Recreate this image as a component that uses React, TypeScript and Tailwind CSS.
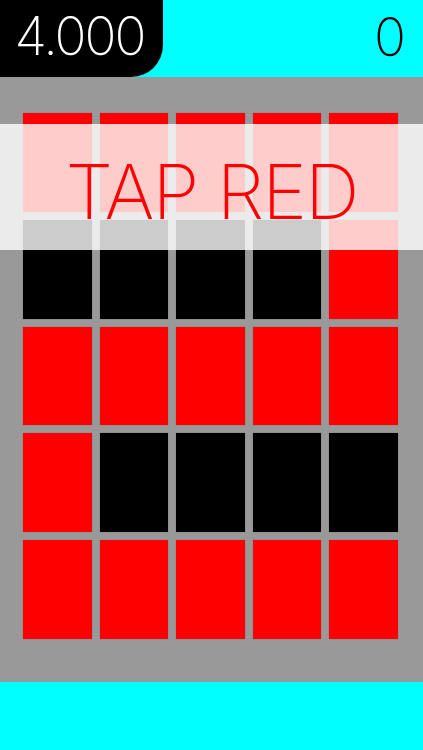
const GRID: ("r" | "b")[][] = [
  ["r", "r", "r", "r", "r"],
  ["b", "b", "b", "b", "r"],
  ["r", "r", "r", "r", "r"],
  ["r", "b", "b", "b", "b"],
  ["r", "r", "r", "r", "r"],
];

const FONT = { fontFamily: "Inter, 'Noto Sans', sans-serif" };

export default function App() {
  return (
    <div
      className="relative flex h-[750px] w-[423px] flex-col overflow-hidden bg-[#00ffff]"
      style={FONT}
    >
      <div className="flex h-[77px] shrink-0 items-start justify-between">
        <div className="flex h-[77px] w-[163px] items-center justify-center rounded-br-[32px] bg-black pb-1 pr-1 text-[53px] font-extralight leading-none tracking-[-2px] text-white">
          4.000
        </div>
        <div className="pr-[17px] pt-[11px] text-[53px] font-extralight leading-none text-black">0</div>
      </div>

      <div className="grid h-[605px] shrink-0 grid-cols-5 grid-rows-5 gap-x-2 gap-y-[8px] bg-[#999999] pb-[43px] pl-[23px] pr-[25px] pt-[36px]">
        {GRID.flat().map((c, i) => (
          <div
            key={i}
            className={
              c === "r"
                ? "bg-[#ff0000] shadow-[0_0_1px_rgba(0,0,0,0.35)]"
                : "bg-black shadow-[0_0_1px_rgba(0,0,0,0.35)]"
            }
          />
        ))}
      </div>

      <div className="absolute left-0 top-[124px] flex h-[126px] w-full items-center justify-center bg-white/80 pt-2">
        <span className="text-[76px] font-extralight leading-none tracking-[-2px] text-[#ff0000]">
          TAP RED
        </span>
      </div>
    </div>
  );
}
